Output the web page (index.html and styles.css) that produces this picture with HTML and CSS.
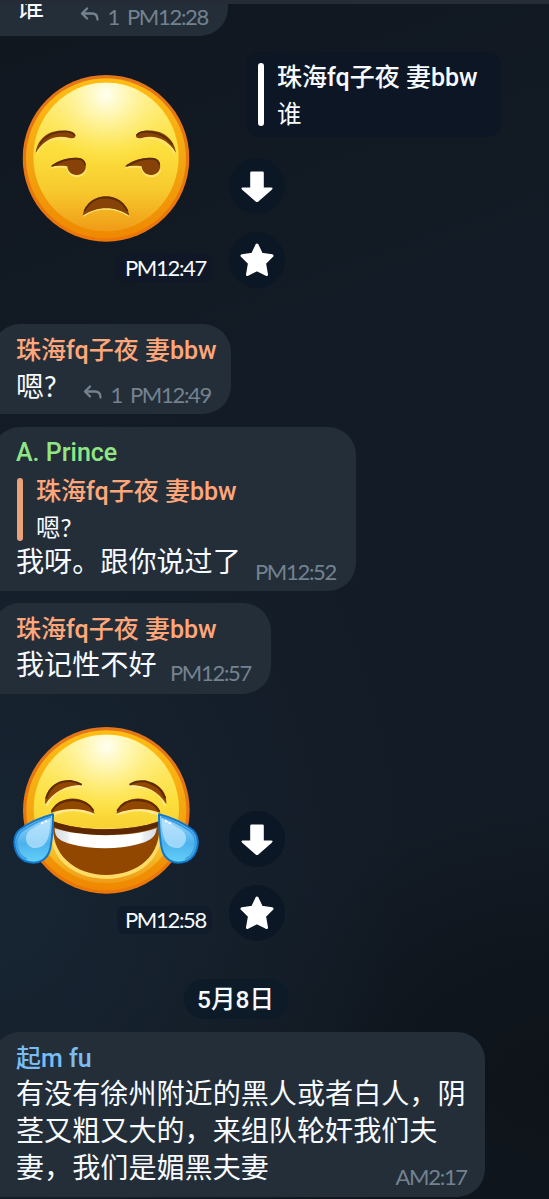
FILE: index.html
```html
<!DOCTYPE html>
<html lang="zh-CN">
<head>
<meta charset="utf-8">
<title>Chat</title>
<link rel="stylesheet" href="styles.css">
</head>
<body>
<svg class="defs" width="0" height="0" aria-hidden="true">
  <defs>
    <linearGradient id="rim" x1="0" y1="0" x2="0" y2="1"><stop offset="0" stop-color="#e3761b"/><stop offset="1" stop-color="#ec7608"/></linearGradient>
    <linearGradient id="ring" x1="0" y1="0" x2="0" y2="1"><stop offset="0" stop-color="#ffbd13"/><stop offset=".55" stop-color="#f3a410"/><stop offset="1" stop-color="#ef8800"/></linearGradient>
    <linearGradient id="face" x1="0" y1="0" x2="0" y2="1"><stop offset="0" stop-color="#fff08c"/><stop offset=".45" stop-color="#fcdf3c"/><stop offset=".72" stop-color="#f7ca2e"/><stop offset="1" stop-color="#f09b16"/></linearGradient>
    <radialGradient id="shine" cx=".5" cy=".08" r=".48"><stop offset="0" stop-color="#fffff2"/><stop offset=".35" stop-color="#fff9bd" stop-opacity=".75"/><stop offset="1" stop-color="#ffec68" stop-opacity="0"/></radialGradient>
    <linearGradient id="tear" x1="0" y1="0" x2="0" y2="1"><stop offset="0" stop-color="#a5dcfa"/><stop offset=".6" stop-color="#4cb2ed"/><stop offset="1" stop-color="#64d1f8"/></linearGradient>
    <linearGradient id="teeth" x1="0" y1="0" x2="1" y2="0"><stop offset="0" stop-color="#d5dce2"/><stop offset=".12" stop-color="#e8edf1"/><stop offset=".16" stop-color="#fff"/><stop offset=".84" stop-color="#fff"/><stop offset=".88" stop-color="#e8edf1"/><stop offset="1" stop-color="#d5dce2"/></linearGradient>
    <symbol id="ball" viewBox="0 0 502 502">
      <circle cx="251" cy="251" r="250" fill="url(#rim)"/>
      <circle cx="251" cy="251" r="240" fill="url(#ring)"/>
      <ellipse cx="251" cy="247" rx="218" ry="223" fill="url(#face)"/>
      <ellipse cx="251" cy="247" rx="218" ry="223" fill="url(#shine)"/>
    </symbol>
    <symbol id="down" viewBox="0 0 56 56"><path d="M22.500 13.500h11q1.300 0 1.300 1.300v14.700h7.200q2.800.2.800 2.200L29.400 43.500q-1.400 1-2.800 0L13.200 31.700q-2-2 .8-2.200h7.200V14.800q0-1.300 1.300-1.300z" fill="#fff"/></symbol>
    <symbol id="star" viewBox="0 0 56 56"><path d="M28 13l4.500 9.300 10.500 1.400-7.500 7.400 2 11.400L28 37.600l-9.500 4.900 2-11.400-7.500-7.400 10.500-1.400z" fill="#fff" stroke="#fff" stroke-width="3" stroke-linejoin="round"/></symbol>
    <symbol id="reply" viewBox="0 0 20 16"><path d="M7 1.500L2 6.500l5 5M2.500 6.500H12q5.500 0 5.500 6" fill="none" stroke="currentColor" stroke-width="2.300" stroke-linecap="round" stroke-linejoin="round"/></symbol>
  </defs>
</svg>
<main class="chat">
  <article class="bubble first">
    <div class="row"><p class="body">谁</p><span class="meta"><svg class="reply"><use href="#reply"/></svg><span class="count">1</span><time>PM12:28</time></span></div>
  </article>

  <section class="sticker one">
    <div class="picture">
      <svg class="emoji" viewBox="0 30 600 540">
        <use href="#ball" x="67" y="44" width="502" height="502"/>
        <g fill="none" stroke="#ffe47a" stroke-width="5" stroke-linecap="round">
          <path d="M112 277Q133 237 174 236Q193 236 221 237M415 237Q448 230 475 239Q507 251 525 278"/>
          <path d="M155 323Q180 317 201 323Q207 349 232 349Q250 347 257 331M378 323Q405 317 424 323Q431 349 456 349Q474 347 481 331M251 467Q280 446 318 446Q358 447 386 467"/>
        </g>
        <g fill="#874207">
          <path d="M107 279C113 233 150 205 205 213Q226 217 226 228Q225 237 209 234C168 222 131 238 107 279z"/>
          <path d="M528 279C522 233 484 205 430 213Q408 217 408 228Q409 237 425 234C470 222 507 242 528 279z"/>
          <path d="M151 320C172 299 213 288 241 295C258 300 261 321 254 332C239 354 204 347 202 319C184 316 168 318 151 320z"/>
          <path d="M374 320C395 299 436 288 464 295C481 300 484 321 477 332C462 354 427 347 425 319C407 316 391 318 374 320z"/>
          <path d="M248 467C260 390 376 389 388 467C347 437 291 437 248 467z"/>
        </g>
        <g fill="none" stroke="#5b2c05" stroke-width="5" stroke-linecap="round">
          <path d="M121 249Q149 211 204 215Q220 218 224 226M411 225Q422 213 444 215Q491 219 516 252"/>
          <path d="M158 317Q199 293 234 296Q252 298 255 313M381 317Q423 293 457 296Q475 298 478 313M254 451Q276 412 318 412Q360 413 382 451"/>
        </g>
      </svg>
      <time class="stamp">PM12:47</time>
    </div>
    <div class="side">
      <div class="quote boxed"><p class="name">珠海fq子夜 妻bbw</p><p class="snippet">谁</p></div>
      <svg class="action"><use href="#down"/></svg>
      <svg class="action"><use href="#star"/></svg>
    </div>
  </section>

  <article class="bubble second">
    <p class="name orange">珠海fq子夜 妻bbw</p>
    <div class="row"><p class="body">嗯<span class="ask">?</span></p><span class="meta"><svg class="reply"><use href="#reply"/></svg><span class="count">1</span><time>PM12:49</time></span></div>
  </article>

  <article class="bubble third">
    <p class="name green">A. Prince</p>
    <div class="quote orange"><p class="name">珠海fq子夜 妻bbw</p><p class="snippet">嗯<span class="ask">?</span></p></div>
    <div class="row"><p class="body">我呀。跟你说过了</p><span class="meta"><time>PM12:52</time></span></div>
  </article>

  <article class="bubble fourth">
    <p class="name orange">珠海fq子夜 妻bbw</p>
    <div class="row"><p class="body">我记性不好</p><span class="meta"><time>PM12:57</time></span></div>
  </article>

  <section class="sticker two">
    <div class="picture">
      <svg class="emoji" viewBox="0 30 600 540">
        <use href="#ball" x="68" y="50" width="502" height="502"/>
        <path d="M158 340C239 360 402 360 478 340C504 448 410 507 318 507C222 506 134 444 158 340z" fill="#ffdc65"/>
        <path d="M160 334C245 367 397 365 477 334C488 440 411 495 318 495C226 495 149 434 160 334z" fill="#924700"/>
        <path d="M160 334C245 367 397 365 477 334L475 349C397 383 243 384 161 350z" fill="#5d2900"/>
        <path d="M164 355C242 382 393 383 470 354C468 386 441 395 413 403C355 419 272 418 215 403C185 395 163 386 164 355z" fill="url(#teeth)"/>
        <g fill="none" stroke="#ffe994" stroke-width="7" stroke-linecap="round">
          <path d="M141 284Q159 246 193 235Q216 227 244 229M392 229Q423 227 450 237Q483 251 495 284"/>
          <path d="M164 312Q217 288 280 312M353 312Q414 288 471 312"/>
        </g>
        <g fill="#924700">
          <path d="M136 283C130 227 193 197 246 225C196 225 161 245 136 283z"/>
          <path d="M499 283C504 227 441 197 388 225C440 225 475 244 499 283z"/>
          <path d="M152 309C171 249 271 253 284 311C239 291 192 294 152 309z"/>
          <path d="M349 311C363 253 462 249 481 309C439 292 393 294 349 311z"/>
        </g>
        <g fill="none" stroke="#5d2900" stroke-width="6" stroke-linecap="round">
          <path d="M139 264Q155 212 212 213Q232 216 243 223M391 223Q408 211 435 214Q480 224 495 263M156 302Q175 270 219 270Q263 273 279 300M353 301Q371 270 414 270Q459 272 477 302"/>
        </g>
        <g>
          <path d="M159 313Q99 329 58 360C31 386 43 438 75 453C112 467 143 451 151 415Q159 373 159 313z" fill="url(#tear)" stroke="#1177cb" stroke-width="6" stroke-linejoin="round"/>
          <path d="M153 320Q109 334 66 363C39 386 48 433 80 448" fill="none" stroke="#3a9be3" stroke-width="5"/>
          <path d="M150 328Q127 338 92 359C68 376 77 409 101 414C145 418 151 370 150 328z" fill="#c7eaff" opacity=".65"/>
          <path d="M123 341l20-10" stroke="#fff" stroke-width="5" stroke-dasharray="8 4"/>
        </g>
        <g transform="matrix(-1 0 0 1 636 0)">
          <path d="M159 313Q99 329 58 360C31 386 43 438 75 453C112 467 143 451 151 415Q159 373 159 313z" fill="url(#tear)" stroke="#1177cb" stroke-width="6" stroke-linejoin="round"/>
          <path d="M153 320Q109 334 66 363C39 386 48 433 80 448" fill="none" stroke="#3a9be3" stroke-width="5"/>
          <path d="M150 328Q127 338 92 359C68 376 77 409 101 414C145 418 151 370 150 328z" fill="#c7eaff" opacity=".65"/>
          <path d="M123 341l20-10" stroke="#fff" stroke-width="5" stroke-dasharray="8 4"/>
        </g>
      </svg>
      <time class="stamp">PM12:58</time>
    </div>
    <div class="side">
      <svg class="action"><use href="#down"/></svg>
      <svg class="action"><use href="#star"/></svg>
    </div>
  </section>

  <div class="date">5月8日</div>

  <article class="bubble last">
    <p class="name blue">起m fu</p>
    <div class="row"><p class="body">有没有徐州附近的黑人或者白人，阴<br>茎又粗又大的，来组队轮奸我们夫<br>妻，我们是媚黑夫妻</p><span class="meta"><time>AM2:17</time></span></div>
  </article>
</main>
</body>
</html>
```
FILE: styles.css
```css
* { box-sizing: border-box; }
body {
  margin: 0;
  width: 549px;
  height: 1199px;
  overflow: hidden;
  color: #f7fbff;
  font-family: Roboto, "Noto Sans CJK SC", sans-serif;
  background:
    radial-gradient(ellipse 400px 520px at 0 880px, #172532, rgba(23, 37, 50, 0)),
    radial-gradient(ellipse 330px 280px at 549px 1080px, #0e1319, rgba(14, 19, 25, 0)),
    linear-gradient(160deg, #10171f 0%, #131b26 35%, #131b26 70%, #101820 100%);
}
p { margin: 0; white-space: nowrap; }
.defs { display: block; height: 0; }
.chat { display: flex; flex-direction: column; height: 1199px; overflow: hidden; border-top: 4px solid #262c35; }

.bubble {
  flex: none;
  margin-left: -8px;
  padding: 8px 20px 0 24px;
  background: #232e39;
  border-radius: 28px 28px 28px 0;
}
.first { width: 236px; height: 32px; padding-top: 0; border-radius: 0 0 28px 0; background: #242e38; }
.second { width: 239px; height: 90px; }
.third { width: 364px; height: 164px; margin-top: 13px; }
.fourth { width: 279px; height: 91px; margin-top: 12px; }
.last { width: 493px; height: 165px; margin-top: 13px; }

.name { font-size: 25px; line-height: 38px; height: 36px; font-weight: 500; }
.body { font-size: 28.100px; line-height: 37px; }
.snippet { font-size: 24.500px; line-height: 40px; }
.ask { font-family: Lato, sans-serif; }
.orange { color: #ffa77a; }
.green { color: #90e684; }
.blue { color: #7abdf5; }

.row { display: flex; justify-content: space-between; height: 37px; }
.first .row { margin-top: -15px; }
.meta { display: flex; align-items: center; align-self: flex-end; height: 26px; color: #748290; margin-bottom: -3px; }
.first .meta { margin-bottom: -4px; }
.third .meta { margin-bottom: -4px; }
.fourth .meta { margin-bottom: -2px; }
.last .row { height: 111px; }
.last .meta { margin-bottom: -3px; margin-left: -70px; margin-right: -2px; }
.last .meta time { margin-right: 11px; }
time, .count { font: 22px/26px Lato, sans-serif; letter-spacing: -1.300px; white-space: nowrap; }
.count { margin: 0 8px 0 7px; }
.reply { width: 20px; height: 16px; margin-bottom: 5px; }

.quote { position: relative; height: 73px; padding-left: 20px; }
.quote::before { content: ""; position: absolute; left: 1px; top: 6px; width: 6px; height: 63px; border-radius: 3px; background: #eba27a; }
.quote .snippet { color: #f7fbff; }
.third > .name { line-height: 36px; }
.third .quote { margin-top: 1px; }
.third .quote .name { line-height: 40px; }
.third .row { margin-top: -1px; }
.boxed { width: 255px; height: 85px; margin-left: 17px; padding: 7px 0 0 31px; border-radius: 14px; background: #0d1625; }
.boxed::before { left: 12px; top: 11px; background: #fff; }

.sticker { display: flex; flex: none; }
.one { height: 288px; }
.two { height: 285px; }
.picture { display: flex; flex-direction: column; width: 229px; padding-top: 34px; }
.two .picture { padding-top: 26px; }
.emoji { display: block; width: 200px; height: 180px; }
.stamp { align-self: flex-end; margin: 4px 17px 0 0; padding: 0 6px 0 8px; line-height: 28px; border-radius: 8px; background: #101828; }
.two .stamp { margin-top: 6px; background: #101c29; }
.side { display: flex; flex-direction: column; gap: 18px; padding-top: 16px; }
.one .boxed { margin-bottom: 3px; }
.two .side { padding-top: 117px; }
.action { display: block; width: 56px; height: 56px; border-radius: 50%; background: #0b1725; }

.date { flex: none; width: 105px; height: 40px; margin-left: 184px; padding-right: 2px; border-radius: 20px; background: #0d1b29; text-align: center; font-size: 24.500px; line-height: 41px; font-weight: 500; }
```
